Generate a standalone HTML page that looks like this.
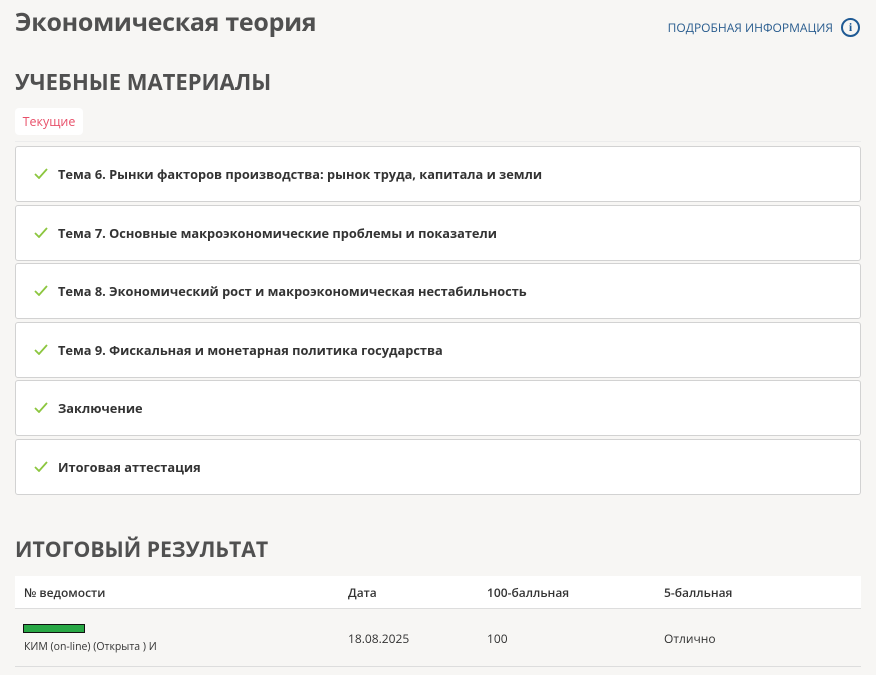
<!DOCTYPE html>
<html><head><meta charset="utf-8"><style>
body{margin:0;background:#f7f6f4;font-family:"Open Sans","Liberation Sans","DejaVu Sans",sans-serif;color:#444;width:876px;height:675px;overflow:hidden;position:relative}
.a{position:absolute}
h1{position:absolute;left:15px;top:5px;margin:0;font-size:25px;font-weight:bold;color:#505050;letter-spacing:-0.3px}
h2{position:absolute;left:15px;margin:0;font-size:22px;font-weight:bold;color:#505050}
.info{position:absolute;right:16px;top:18px;font-size:12px;color:#2a5d8f;display:flex;align-items:center;gap:8px}
.ic{width:15px;height:15px;border:2px solid #1f5a94;border-radius:50%;display:flex;align-items:center;justify-content:center;font-weight:bold;font-size:12px;color:#1f5a94;font-family:"Liberation Serif",serif}
.tab{position:absolute;left:15px;top:108px;width:68px;height:27px;background:#fff;border-radius:4px;color:#e8506a;font-size:12.5px;line-height:27px;text-align:center}
.card{position:absolute;left:15px;width:844px;height:54px;background:#fff;border:1px solid #d2d2d2;border-radius:3px;font-size:12.8px;font-weight:bold;color:#333;line-height:54px}
.card svg{position:absolute;left:18px;top:21px}
.card span.t{position:absolute;left:42px}
.th{position:absolute;top:576px;left:15px;width:846px;height:32px;background:#fff;border-bottom:1px solid #ddd}
.f{position:absolute;font-size:12px;color:#333}
</style></head><body>
<h1>Экономическая теория</h1>
<div class="info">ПОДРОБНАЯ ИНФОРМАЦИЯ <div class="ic">i</div></div>
<h2 style="top:67px">УЧЕБНЫЕ МАТЕРИАЛЫ</h2>
<div class="tab">Текущие</div>
<div class="a" style="left:15px;top:141px;width:846px;height:1px;background:#ececec"></div>
<div class="card" style="top:146px"><svg width="14" height="11" viewBox="0 0 14 11"><path d="M1 6l4 4 8-9" fill="none" stroke="#8cc63f" stroke-width="1.8"/></svg><span class="t">Тема 6. Рынки факторов производства: рынок труда, капитала и земли</span></div>
<div class="card" style="top:205px"><svg width="14" height="11" viewBox="0 0 14 11"><path d="M1 6l4 4 8-9" fill="none" stroke="#8cc63f" stroke-width="1.8"/></svg><span class="t">Тема 7. Основные макроэкономические проблемы и показатели</span></div>
<div class="card" style="top:263px"><svg width="14" height="11" viewBox="0 0 14 11"><path d="M1 6l4 4 8-9" fill="none" stroke="#8cc63f" stroke-width="1.8"/></svg><span class="t">Тема 8. Экономический рост и макроэкономическая нестабильность</span></div>
<div class="card" style="top:322px"><svg width="14" height="11" viewBox="0 0 14 11"><path d="M1 6l4 4 8-9" fill="none" stroke="#8cc63f" stroke-width="1.8"/></svg><span class="t">Тема 9. Фискальная и монетарная политика государства</span></div>
<div class="card" style="top:380px"><svg width="14" height="11" viewBox="0 0 14 11"><path d="M1 6l4 4 8-9" fill="none" stroke="#8cc63f" stroke-width="1.8"/></svg><span class="t">Заключение</span></div>
<div class="card" style="top:439px"><svg width="14" height="11" viewBox="0 0 14 11"><path d="M1 6l4 4 8-9" fill="none" stroke="#8cc63f" stroke-width="1.8"/></svg><span class="t">Итоговая аттестация</span></div>
<h2 style="top:535px;font-size:21.2px">ИТОГОВЫЙ РЕЗУЛЬТАТ</h2>
<div class="th"></div>
<div class="f" style="left:24px;top:584px;font-weight:600">№ ведомости</div>
<div class="f" style="left:348px;top:584px;font-weight:600">Дата</div>
<div class="f" style="left:487px;top:584px;font-weight:600">100-балльная</div>
<div class="f" style="left:664px;top:584px;font-weight:600">5-балльная</div>
<div class="a" style="left:23px;top:624px;width:60px;height:7px;background:#28a745;border:1px solid #111"></div>
<div class="f" style="left:24px;top:640px;font-size:10.5px">КИМ (on-line) (Открыта ) И</div>
<div class="f" style="left:348px;top:630px">18.08.2025</div>
<div class="f" style="left:487px;top:630px">100</div>
<div class="f" style="left:664px;top:630px">Отлично</div>
<div class="a" style="left:15px;top:666px;width:846px;height:1px;background:#ddd"></div>
</body></html>
